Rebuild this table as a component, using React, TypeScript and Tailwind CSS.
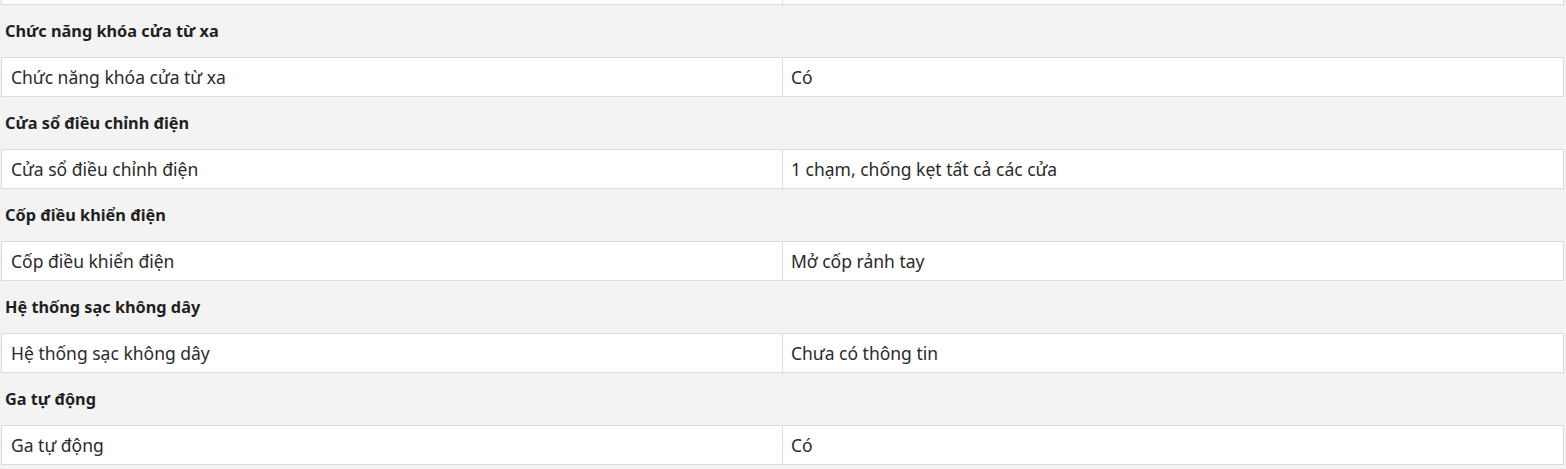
const sections = [
  { title: "Chức năng khóa cửa từ xa", label: "Chức năng khóa cửa từ xa", value: "Có" },
  { title: "Cửa sổ điều chỉnh điện", label: "Cửa sổ điều chỉnh điện", value: "1 chạm, chống kẹt tất cả các cửa" },
  { title: "Cốp điều khiển điện", label: "Cốp điều khiển điện", value: "Mở cốp rảnh tay" },
  { title: "Hệ thống sạc không dây", label: "Hệ thống sạc không dây", value: "Chưa có thông tin" },
  { title: "Ga tự động", label: "Ga tự động", value: "Có" },
];

const Row = ({ label, value }: { label: string; value: string }) => (
  <table className="w-full border-collapse table-fixed bg-white text-[17.5px] text-[#2a2a2a]">
    <tbody>
      <tr className="h-[39px]">
        <td className="border border-[#dcdcdc] pl-[9px] py-0 align-middle w-[781px]">{label}</td>
        <td className="border border-[#dcdcdc] pl-[8px] py-0 align-middle">{value}</td>
      </tr>
    </tbody>
  </table>
);

export default function App() {
  return (
    <div className="w-[1566px] h-[469px] overflow-hidden bg-[#f3f3f3] font-['Noto_Sans',sans-serif]">
      <div className="pl-[1px] pr-[2px] -mt-[35px]">
        <Row label="" value="" />
        {sections.map((s) => (
          <div key={s.title}>
            <h3 className="h-[52px] flex items-center pl-[4px] font-bold text-[16.3px] text-[#1f1f1f]">{s.title}</h3>
            <Row label={s.label} value={s.value} />
          </div>
        ))}
      </div>
    </div>
  );
}
